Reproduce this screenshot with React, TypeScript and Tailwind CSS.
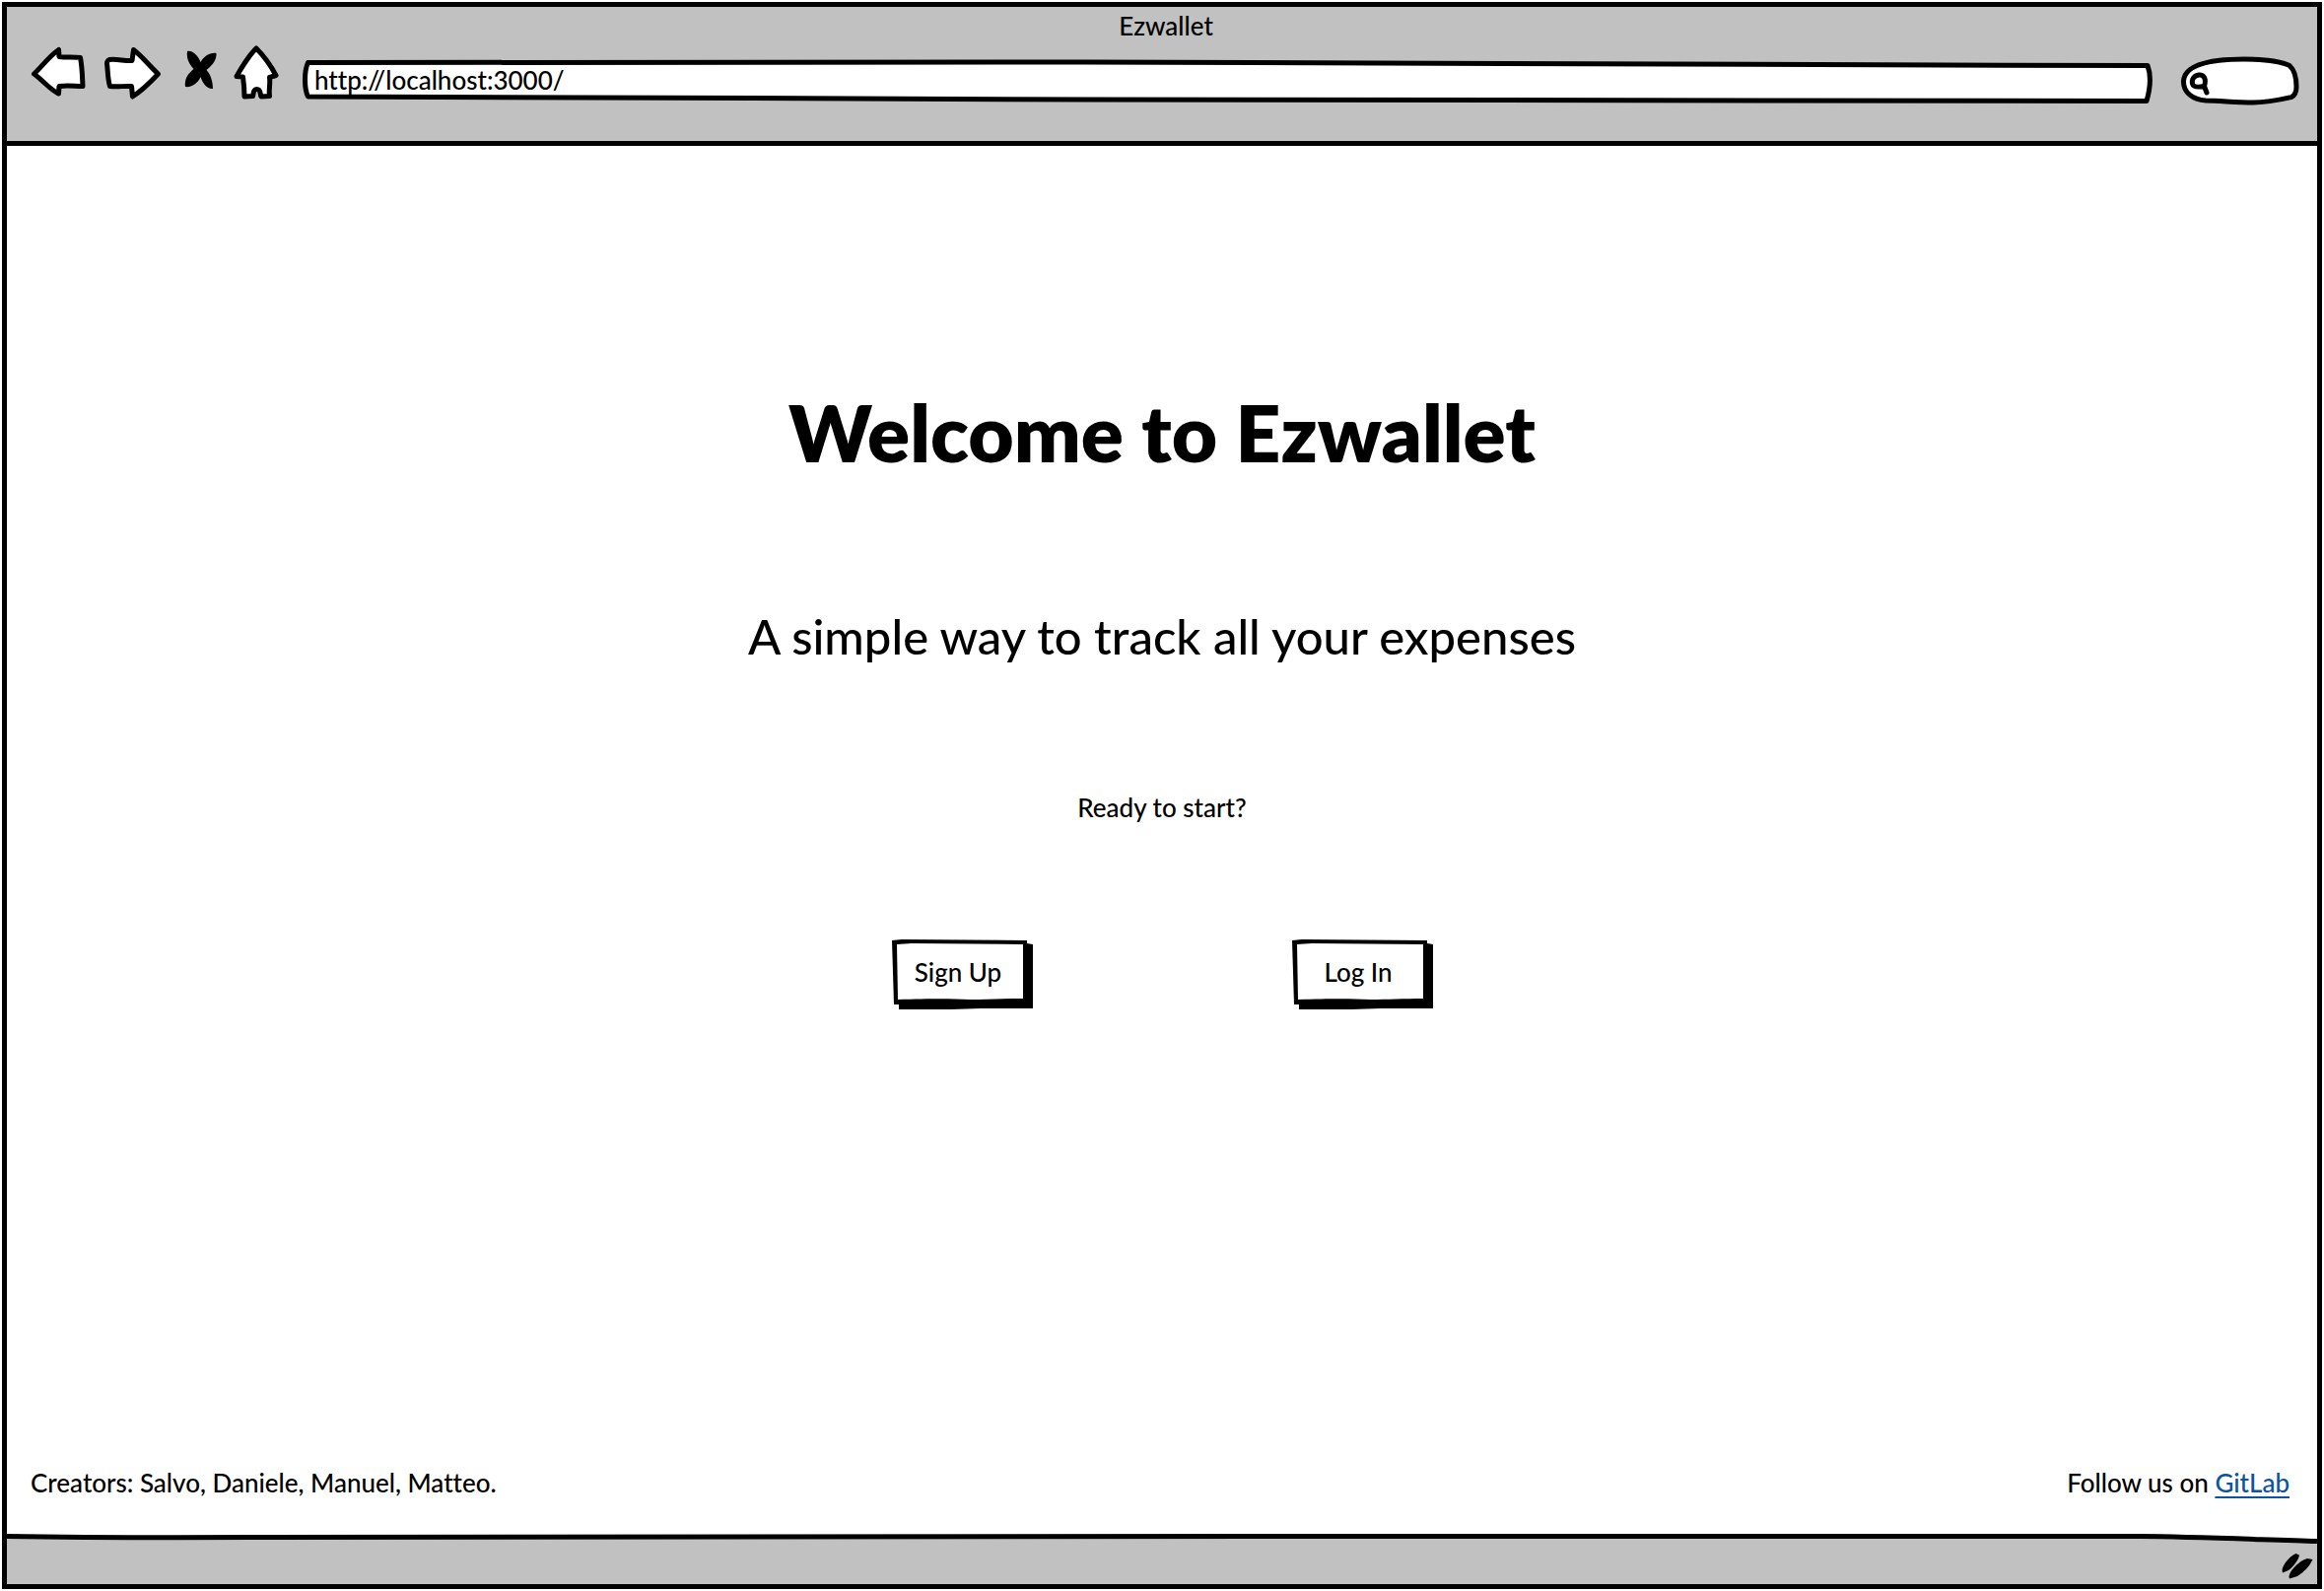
import type { ReactNode } from 'react';

const ink = {
  stroke: '#000',
  strokeWidth: 5,
  strokeLinejoin: 'round' as const,
  strokeLinecap: 'round' as const,
};

function ToolButton({ label, children }: { label: string; children: ReactNode }) {
  return (
    <button type="button" aria-label={label} className="shrink-0 cursor-pointer">
      {children}
    </button>
  );
}

function BackIcon() {
  return (
    <svg className="block h-[60px] w-[56px]" viewBox="31 45 56 60" aria-hidden="true">
      <path
        d="M34.500 75C43 67 50 57 59.500 50.500L60 57.500C67 58.500 75 57.500 81.500 58.500C83.500 68 83.500 79 84 87.500C76 87.500 68 86.500 60 87.500L59.500 95C51 91 44 82 34.500 75Z"
        fill="#fff"
        {...ink}
      />
    </svg>
  );
}

function ForwardIcon() {
  return (
    <svg className="block h-[60px] w-[64px]" viewBox="103 45 64 60" aria-hidden="true">
      <path
        d="M111 60.500C119 59.500 126 62 134 61.500L135.500 50.500C144 57 152 67 160.500 75C153 83 144 92 134.500 98L133.500 87.500C126 87 119 88.500 111.500 87.500C109 79 109.500 71 108.500 64.500Q108.500 61.500 111 60.500Z"
        fill="#fff"
        {...ink}
      />
    </svg>
  );
}

function StopIcon() {
  return (
    <svg className="block h-[60px] w-[38px]" viewBox="183 45 38 60" aria-hidden="true">
      <path d="M190 52C195 51 200 55 203.500 63C207 57 213 53 219.500 54C220 60 216 66 209.500 71C214 76 216 83 216 90C210 90.500 206 85 203.500 78C201 84 195 89 188 88C187 81 190 75 196.500 70C191 64 189 58 190 52Z" />
    </svg>
  );
}

function HomeIcon() {
  return (
    <svg className="block h-[60px] w-[46px]" viewBox="237 45 46 60" aria-hidden="true">
      <path
        d="M260 49C268 57 275 67 280 76.500L273.500 78.500C274.500 85 272.500 91 273.500 97.500L265 98C263.500 95 265 90.500 260.500 90.500C256.500 90.500 257.500 95 256.500 97.500L248 98C248 91 247.500 85 246.500 78L240 77.500C246 67 252 57 260 49Z"
        fill="#fff"
        {...ink}
      />
    </svg>
  );
}

function AddressBar() {
  return (
    <div className="relative ml-2 h-[60px] min-w-0 flex-1">
      <svg
        className="absolute inset-0 h-full w-full"
        viewBox="307 45 1877 60"
        preserveAspectRatio="none"
        aria-hidden="true"
      >
        <path
          d="M312.500 63.500C600 63 850 64 1100 63C1400 62.500 1800 66 2178 66.500C2182 77 2180 92 2177 102.500C1900 103.500 1500 102 1100 101C800 100.500 600 98 312.500 98C308.500 90 308.500 72 312.500 63.500Z"
          fill="#fff"
          vectorEffect="non-scaling-stroke"
          {...ink}
        />
      </svg>
      <input
        type="text"
        aria-label="Address"
        defaultValue="http://localhost:3000/"
        className="relative h-full w-full bg-transparent pt-3 pr-4 pl-3 outline-none"
      />
    </div>
  );
}

function SearchBox() {
  return (
    <div className="relative ml-3 h-[60px] w-[122px] shrink-0">
      <svg className="absolute inset-0 h-full w-full" viewBox="2213 45 122 60" overflow="visible" aria-hidden="true">
        <path
          d="M2238 102C2225 101 2215 94 2215.500 82C2217 65 2245 60 2277 60C2293 60 2312 61 2323 66.500C2329 72 2330 82 2330 88C2330 94 2328 97 2325 98.500C2314 101 2301 104 2286 104C2268 104 2252 102 2238 102Z"
          fill="#fff"
          {...ink}
        />
        <path
          d="M2236.500 87.500C2239 80 2236 75.500 2231 76C2226 76.500 2223.500 81 2224.500 85C2225.500 89 2231 88.500 2236.500 87.500L2239 94"
          fill="none"
          {...ink}
        />
      </svg>
      <input
        type="search"
        aria-label="Search"
        className="relative h-full w-full bg-transparent pt-3 pr-3 pl-8 outline-none"
      />
    </div>
  );
}

function SketchButton({ children }: { children: ReactNode }) {
  return (
    <button type="button" className="relative h-[72px] w-[143px] cursor-pointer pr-2 pb-1.5">
      <svg
        className="absolute inset-0 h-full w-full"
        viewBox="0 0 143 72"
        preserveAspectRatio="none"
        aria-hidden="true"
      >
        <path d="M0 1L10 0L137 1V4L143 5V70L90 70L60 71L7 71V66L2 66Z" />
        <path d="M5 5L20 4L133 5V60C115 60 95 61 80 61C60 60 40 60 6 61Z" fill="#fff" />
      </svg>
      <span className="relative">{children}</span>
    </button>
  );
}

function ResizeGrip() {
  return (
    <svg className="block h-[28px] w-[34px]" viewBox="2313 1575 34 28" aria-hidden="true">
      <path d="M2329.500 1576L2333 1577.500C2332 1583 2327 1589 2322 1593L2316 1595.500C2313.500 1591 2321 1580 2329.500 1576Z" />
      <path d="M2341 1581L2346.500 1582C2343 1590 2337 1595 2331 1599L2323 1601.500C2320 1597 2331 1584 2341 1581Z" />
    </svg>
  );
}

export default function App() {
  return (
    <div className="flex min-h-screen flex-col bg-white p-0.5 font-['Lato',sans-serif] text-[26px] leading-8 font-medium text-black [font-variant-ligatures:none]">
      <div className="flex flex-1 flex-col border-5 border-black">
        <header className="border-b-5 border-black bg-[#c1c1c1] pr-4 pb-[38px] pl-6">
          <div className="text-center leading-[38px]">Ezwallet</div>
          <nav aria-label="Browser" className="flex items-center gap-4">
            <ToolButton label="Back">
              <BackIcon />
            </ToolButton>
            <ToolButton label="Forward">
              <ForwardIcon />
            </ToolButton>
            <ToolButton label="Stop">
              <StopIcon />
            </ToolButton>
            <ToolButton label="Home">
              <HomeIcon />
            </ToolButton>
            <AddressBar />
            <SearchBox />
          </nav>
        </header>

        <main className="flex flex-1 flex-col items-center pt-[242px]">
          <h1 className="text-center text-[80px] leading-[96px] font-extrabold">Welcome to Ezwallet</h1>
          <p className="mt-[135px] text-center text-[49px] leading-[48px]">
            A simple way to track all your expenses
          </p>
          <p className="mt-[134px] text-center">Ready to start?</p>
          <div className="mt-[118px] flex gap-[263px]">
            <SketchButton>Sign Up</SketchButton>
            <SketchButton>Log In</SketchButton>
          </div>
          <div className="mt-auto flex w-full justify-between pr-7 pb-[35px] pl-6">
            <p>Creators: Salvo, Daniele, Manuel, Matteo.</p>
            <p>
              Follow us on{' '}
              <a href="#gitlab" className="text-[#0b559f] underline decoration-2 underline-offset-4">
                GitLab
              </a>
            </p>
          </div>
        </main>

        <footer className="relative flex justify-end bg-[#c1c1c1] pt-5 pr-1 pb-1">
          <svg
            className="absolute inset-x-0 top-0 h-3 w-full"
            viewBox="0 0 2344 12"
            preserveAspectRatio="none"
            aria-hidden="true"
          >
            <path d="M0 0H2344V8.500C2290 7 2220 4 2165 3.500H0Z" fill="#fff" />
            <path
              d="M0 3.500C60 4.500 150 5 260 4.500C400 4 900 3 1400 3.500H2165C2220 4 2290 7 2344 8.500"
              fill="none"
              stroke="#000"
              strokeWidth="5"
            />
          </svg>
          <ResizeGrip />
        </footer>
      </div>
    </div>
  );
}
